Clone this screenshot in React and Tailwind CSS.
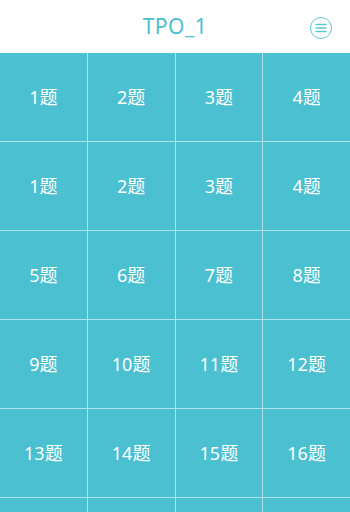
import { Menu } from "lucide-react";

const items = [1, 2, 3, 4, 1, 2, 3, 4, 5, 6, 7, 8, 9, 10, 11, 12, 13, 14, 15, 16, null, null, null, null];

function App() {
  return (
    <div className="w-[350px] h-[512px] overflow-hidden bg-white flex flex-col" style={{ fontFamily: '"Noto Sans", "Noto Sans CJK SC", sans-serif' }}>
      <div className="h-[53px] shrink-0 relative flex items-center justify-center bg-white">
        <h1 className="text-[21px] text-[#4bbfcf] tracking-wide">TPO_1</h1>
        <div className="absolute right-[18px] top-[17px] w-[22px] h-[22px] rounded-full border-[1.5px] border-[#5cc6d4] flex items-center justify-center">
          <svg width="12" height="10" viewBox="0 0 12 10" fill="none" stroke="#5cc6d4" strokeWidth="1.4" strokeLinecap="round">
            <path d="M1 1.5h10M1 5h10M1 8.5h10" />
          </svg>
        </div>
      </div>
      <div className="grid grid-cols-4 gap-px bg-[#b0e2ea]">
        {items.map((n, i) => (
          <div key={i} className="h-[88px] bg-[#4ac0d0] flex items-center justify-center text-white text-[18px]">
            {n !== null ? `${n}题` : ""}
          </div>
        ))}
      </div>
    </div>
  );
}

export default App;
